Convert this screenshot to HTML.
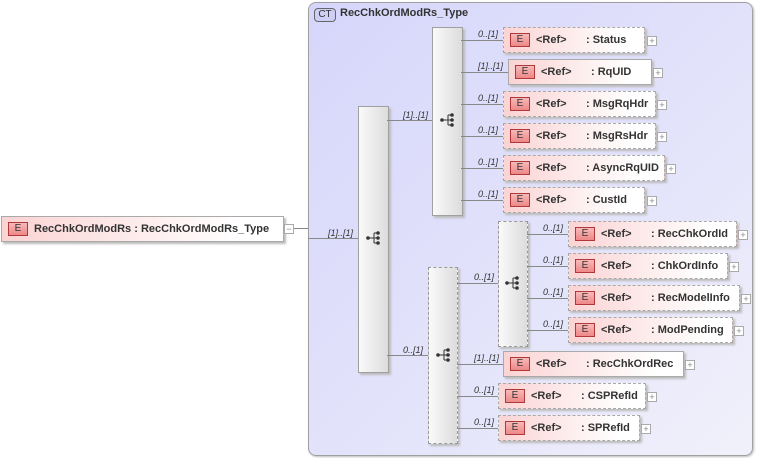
<!DOCTYPE html><html><head><style>
body{margin:0;width:757px;height:458px;background:#fff;position:relative;overflow:hidden;font-family:"Liberation Sans",sans-serif;}
.a{position:absolute}
.ct{left:308px;top:2px;width:443px;height:452px;border:1px solid #a0a0a0;border-radius:8px;background:linear-gradient(135deg,#d6d6fb 0%,#e4e4fb 60%,#f1f1fb 100%);box-shadow:1px 1px 2px #bbb}
.ctl{left:314px;top:8px;width:20px;height:12px;border:1px solid #666;border-radius:4px;background:#cfcff5;font-size:10px;line-height:12px;text-align:center;color:#333}
.ctt{left:340px;top:7px;font-size:11px;font-weight:bold;color:#333}
.seq{background:linear-gradient(90deg,#fafafa,#dcdcdc);border:1px solid #a0a0a0;box-shadow:2px 2px 2px #bbb}
.dash{border:1px dashed #999}
.el{height:24px;background:linear-gradient(90deg,#fbd3d3,#fff 85%);border:1px solid #aaa;box-shadow:2px 2px 2px #bbb;font-size:11px;font-weight:bold;color:#333;line-height:24px;white-space:nowrap}
.el.d{border:1px dashed #aaa}
.e{position:absolute;left:6px;top:5px;width:18px;height:12px;border:1px solid #b03838;background:linear-gradient(#f7b9b9,#ee8888);font-size:10px;font-weight:normal;line-height:12px;text-align:center;color:#333}
.r{position:absolute;left:32px}
.n{position:absolute;left:82px}
.p{width:8px;height:8px;border:1px solid #aaa;background:#fff;font-size:9px;line-height:8px;text-align:center;color:#888}
.h{height:1px;background:#888}
.lb{font-size:9px;font-style:italic;color:#333}
.ic{width:16px;height:12px}
</style></head><body>
<div class="a ct"></div>
<div class="a ctl">CT</div>
<div class="a ctt">RecChkOrdModRs_Type</div>

<!-- root -->
<div class="a el" style="left:1px;top:216px;width:281px"><div class="e">E</div><span class="a" style="left:32px">RecChkOrdModRs : RecChkOrdModRs_Type</span></div>
<div class="a p" style="left:284px;top:224px">−</div>
<div class="a h" style="left:294px;top:228px;width:14px"></div>
<div class="a h" style="left:308px;top:238px;width:50px"></div>
<div class="a lb" style="left:328px;top:228px">[1]..[1]</div>

<!-- main seq -->
<div class="a seq" style="left:358px;top:106px;width:29px;height:265px"></div>
<svg class="a" style="left:366px;top:231px" width="16" height="14"><path d="M2 7H8M8 2V12M8 2H12M8 7H12M8 12H12" stroke="#333" fill="none"/><circle cx="2" cy="7" r="1.8" fill="#333"/><circle cx="12" cy="2" r="1.8" fill="#333"/><circle cx="12" cy="7" r="1.8" fill="#333"/><circle cx="12" cy="12" r="1.8" fill="#333"/></svg>
<div class="a h" style="left:387px;top:120px;width:45px"></div>
<div class="a lb" style="left:403px;top:110px">[1]..[1]</div>
<div class="a h" style="left:387px;top:355px;width:41px"></div>
<div class="a lb" style="left:403px;top:345px">0..[1]</div>

<!-- top seq -->
<div class="a seq" style="left:432px;top:27px;width:29px;height:187px"></div>
<svg class="a" style="left:440px;top:113px" width="16" height="14"><path d="M2 7H8M8 2V12M8 2H12M8 7H12M8 12H12" stroke="#333" fill="none"/><circle cx="2" cy="7" r="1.8" fill="#333"/><circle cx="12" cy="2" r="1.8" fill="#333"/><circle cx="12" cy="7" r="1.8" fill="#333"/><circle cx="12" cy="12" r="1.8" fill="#333"/></svg>

<div class="a h" style="left:461px;top:40px;width:42px"></div><div class="a lb" style="left:478px;top:29px">0..[1]</div>
<div class="a el d" style="left:503px;top:27px;width:140px"><div class="e">E</div><span class="r">&lt;Ref&gt;</span><span class="n">: Status</span></div><div class="a p" style="left:647px;top:36px">+</div>

<div class="a h" style="left:461px;top:72px;width:47px"></div><div class="a lb" style="left:478px;top:61px">[1]..[1]</div>
<div class="a el" style="left:508px;top:59px;width:142px"><div class="e">E</div><span class="r">&lt;Ref&gt;</span><span class="n">: RqUID</span></div><div class="a p" style="left:653px;top:68px">+</div>

<div class="a h" style="left:461px;top:104px;width:42px"></div><div class="a lb" style="left:478px;top:93px">0..[1]</div>
<div class="a el d" style="left:503px;top:91px;width:151px"><div class="e">E</div><span class="r">&lt;Ref&gt;</span><span class="n">: MsgRqHdr</span></div><div class="a p" style="left:657px;top:100px">+</div>

<div class="a h" style="left:461px;top:136px;width:42px"></div><div class="a lb" style="left:478px;top:125px">0..[1]</div>
<div class="a el d" style="left:503px;top:123px;width:151px"><div class="e">E</div><span class="r">&lt;Ref&gt;</span><span class="n">: MsgRsHdr</span></div><div class="a p" style="left:657px;top:132px">+</div>

<div class="a h" style="left:461px;top:168px;width:42px"></div><div class="a lb" style="left:478px;top:157px">0..[1]</div>
<div class="a el d" style="left:503px;top:155px;width:160px"><div class="e">E</div><span class="r">&lt;Ref&gt;</span><span class="n">: AsyncRqUID</span></div><div class="a p" style="left:666px;top:164px">+</div>

<div class="a h" style="left:461px;top:200px;width:42px"></div><div class="a lb" style="left:478px;top:189px">0..[1]</div>
<div class="a el d" style="left:503px;top:187px;width:140px"><div class="e">E</div><span class="r">&lt;Ref&gt;</span><span class="n">: CustId</span></div><div class="a p" style="left:647px;top:196px">+</div>

<!-- lower seq -->
<div class="a seq dash" style="left:428px;top:267px;width:28px;height:175px"></div>
<svg class="a" style="left:436px;top:348px" width="16" height="14"><path d="M2 7H8M8 2V12M8 2H12M8 7H12M8 12H12" stroke="#333" fill="none"/><circle cx="2" cy="7" r="1.8" fill="#333"/><circle cx="12" cy="2" r="1.8" fill="#333"/><circle cx="12" cy="7" r="1.8" fill="#333"/><circle cx="12" cy="12" r="1.8" fill="#333"/></svg>
<div class="a h" style="left:457px;top:283px;width:41px"></div><div class="a lb" style="left:474px;top:272px">0..[1]</div>

<div class="a seq dash" style="left:498px;top:221px;width:28px;height:124px"></div>
<svg class="a" style="left:505px;top:276px" width="16" height="14"><path d="M2 7H8M8 2V12M8 2H12M8 7H12M8 12H12" stroke="#333" fill="none"/><circle cx="2" cy="7" r="1.8" fill="#333"/><circle cx="12" cy="2" r="1.8" fill="#333"/><circle cx="12" cy="7" r="1.8" fill="#333"/><circle cx="12" cy="12" r="1.8" fill="#333"/></svg>

<div class="a h" style="left:527px;top:234px;width:41px"></div><div class="a lb" style="left:543px;top:223px">0..[1]</div>
<div class="a el d" style="left:568px;top:221px;width:167px"><div class="e">E</div><span class="r">&lt;Ref&gt;</span><span class="n">: RecChkOrdId</span></div><div class="a p" style="left:738px;top:230px">+</div>

<div class="a h" style="left:527px;top:266px;width:41px"></div><div class="a lb" style="left:543px;top:255px">0..[1]</div>
<div class="a el d" style="left:568px;top:253px;width:158px"><div class="e">E</div><span class="r">&lt;Ref&gt;</span><span class="n">: ChkOrdInfo</span></div><div class="a p" style="left:729px;top:262px">+</div>

<div class="a h" style="left:527px;top:298px;width:41px"></div><div class="a lb" style="left:543px;top:287px">0..[1]</div>
<div class="a el d" style="left:568px;top:285px;width:170px"><div class="e">E</div><span class="r">&lt;Ref&gt;</span><span class="n">: RecModelInfo</span></div><div class="a p" style="left:741px;top:294px">+</div>

<div class="a h" style="left:527px;top:330px;width:41px"></div><div class="a lb" style="left:543px;top:319px">0..[1]</div>
<div class="a el d" style="left:568px;top:317px;width:163px"><div class="e">E</div><span class="r">&lt;Ref&gt;</span><span class="n">: ModPending</span></div><div class="a p" style="left:734px;top:326px">+</div>

<div class="a h" style="left:457px;top:364px;width:46px"></div><div class="a lb" style="left:474px;top:353px">[1]..[1]</div>
<div class="a el" style="left:503px;top:351px;width:179px"><div class="e">E</div><span class="r">&lt;Ref&gt;</span><span class="n">: RecChkOrdRec</span></div><div class="a p" style="left:685px;top:360px">+</div>

<div class="a h" style="left:457px;top:396px;width:41px"></div><div class="a lb" style="left:474px;top:385px">0..[1]</div>
<div class="a el d" style="left:498px;top:383px;width:146px"><div class="e">E</div><span class="r">&lt;Ref&gt;</span><span class="n">: CSPRefId</span></div><div class="a p" style="left:647px;top:392px">+</div>

<div class="a h" style="left:457px;top:428px;width:41px"></div><div class="a lb" style="left:474px;top:417px">0..[1]</div>
<div class="a el d" style="left:498px;top:415px;width:140px"><div class="e">E</div><span class="r">&lt;Ref&gt;</span><span class="n">: SPRefId</span></div><div class="a p" style="left:641px;top:424px">+</div>
</body></html>
